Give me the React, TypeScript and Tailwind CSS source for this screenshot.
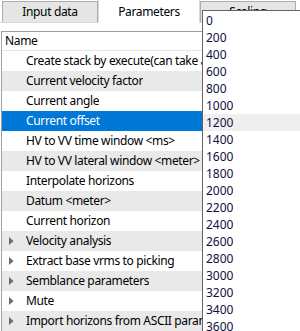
import React from "react";

const rows: { label: string; arrow?: boolean; bg: "w" | "g" | "b" }[] = [
  { label: "Create stack by execute(can take a long time)", bg: "w" },
  { label: "Current velocity factor", bg: "g" },
  { label: "Current angle", bg: "w" },
  { label: "Current offset", bg: "b" },
  { label: "HV to VV time window <ms>", bg: "w" },
  { label: "HV to VV lateral window <meter>", bg: "g" },
  { label: "Interpolate horizons", bg: "w" },
  { label: "Datum <meter>", bg: "g" },
  { label: "Current horizon", bg: "w" },
  { label: "Velocity analysis", arrow: true, bg: "g" },
  { label: "Extract base vrms to picking", arrow: true, bg: "w" },
  { label: "Semblance parameters", arrow: true, bg: "g" },
  { label: "Mute", arrow: true, bg: "w" },
  { label: "Import horizons from ASCII parameters", arrow: true, bg: "g" },
];

const values = [
  "0", "200", "400", "600", "800", "1000", "1200", "1400", "1600", "1800",
  "2000", "2200", "2400", "2600", "2800", "3000", "3200", "3400", "3600",
];

function Arrow() {
  return (
    <svg width="5" height="8" viewBox="0 0 5 8" className="shrink-0">
      <path d="M0 0 L4.5 4 L0 8 Z" fill="#6b6b6b" />
    </svg>
  );
}

export default function App() {
  return (
    <div
      className="relative w-[300px] h-[331px] overflow-hidden bg-white text-[12px] tracking-[-0.35px] text-black"
      style={{ fontFamily: '"Noto Sans", "Liberation Sans", sans-serif' }}
    >
      {/* tabs */}
      <div className="flex h-[23px] items-end border-b border-[#d9d9d9]">
        <div className="ml-[2px] flex h-[21px] w-[96px] items-center justify-center border border-b-0 border-[#acacac] bg-[#e5e5e5] leading-none">
          Input data
        </div>
        <div className="relative z-10 -mb-px flex h-[24px] w-[102px] items-center justify-center border border-b-0 border-[#d9d9d9] bg-white leading-none">
          Parameters
        </div>
        <div className="flex h-[21px] w-[96px] items-center justify-center border border-b-0 border-[#acacac] bg-[#e5e5e5] leading-none">
          Scaling
        </div>
      </div>

      {/* pane */}
      <div className="pt-[8px]">
        <div className="ml-px border-l border-t border-[#a0a0a0]">
          <div className="flex h-[19px] items-center border-b border-[#e5e5e5] pl-[3px]">
            Name
          </div>
          {rows.map((r, i) => (
            <div
              key={i}
              className={
                "flex h-[20px] items-center whitespace-nowrap " +
                (r.bg === "g"
                  ? "bg-[#e9e9e9]"
                  : r.bg === "b"
                  ? "bg-[#0078d7] text-white"
                  : "bg-white")
              }
            >
              <div className="flex w-[24px] shrink-0 items-center pl-[7px]">
                {r.arrow ? <Arrow /> : null}
              </div>
              <span className="block max-w-[177px] overflow-hidden">{r.label}</span>
            </div>
          ))}
        </div>
      </div>

      {/* dropdown list */}
      <div className="absolute left-[202px] top-[10px] w-[100px] h-[322px] overflow-hidden border-l border-t border-[#646464] bg-white pt-px tracking-normal">
        {values.map((v) => (
          <div
            key={v}
            className={
              "flex h-[17px] items-center pl-[3px] text-[#101040] " +
              (v === "1200" ? "bg-[#efefef]" : "")
            }
          >
            {v}
          </div>
        ))}
      </div>
    </div>
  );
}
